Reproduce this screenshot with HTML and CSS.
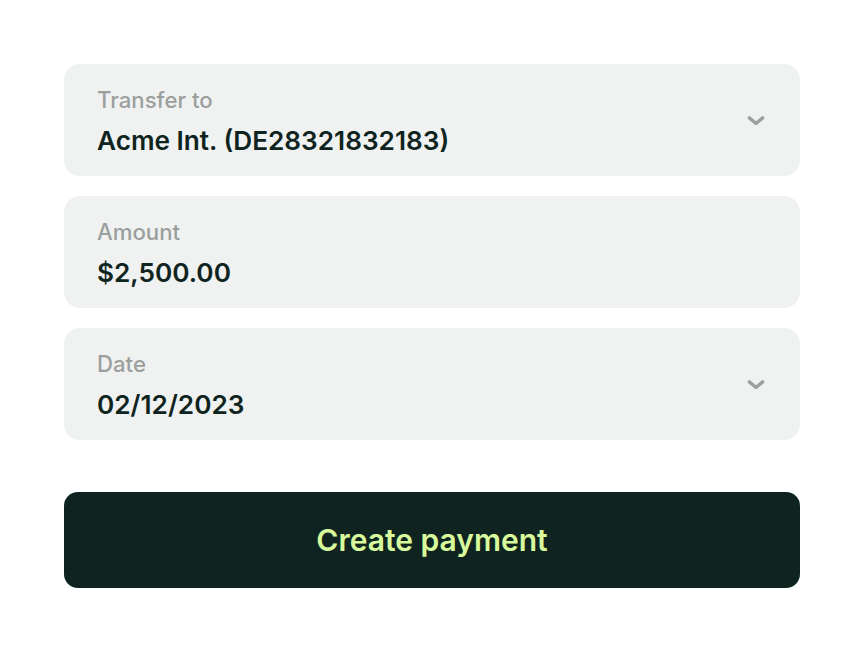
FILE: index.html
```html
<!DOCTYPE html>
<html>
<head>
<meta charset="utf-8">
<link rel="stylesheet" href="styles.css">
</head>
<body>
<main class="form">
  <div class="field">
    <div class="field-text">
      <div class="label">Transfer to</div>
      <div class="value">Acme Int. (DE28321832183)</div>
    </div>
    <svg class="chevron" width="18" height="12" viewBox="0 0 18 12"><path d="M2.5 3 L9 8.5 L15.5 3" fill="none" stroke="#9b9f9d" stroke-width="3.6" stroke-linecap="round" stroke-linejoin="round"/></svg>
  </div>
  <div class="field">
    <div class="field-text">
      <div class="label">Amount</div>
      <div class="value">$2,500.00</div>
    </div>
  </div>
  <div class="field">
    <div class="field-text">
      <div class="label">Date</div>
      <div class="value">02/12/2023</div>
    </div>
    <svg class="chevron" width="18" height="12" viewBox="0 0 18 12"><path d="M2.5 3 L9 8.5 L15.5 3" fill="none" stroke="#9b9f9d" stroke-width="3.6" stroke-linecap="round" stroke-linejoin="round"/></svg>
  </div>
  <button class="submit">Create payment</button>
</main>
</body>
</html>
```

FILE: styles.css
```css
* { box-sizing: border-box; }
html, body { margin: 0; padding: 0; background: #ffffff; }
body { font-family: Inter, "Noto Sans", sans-serif; }
.form {
  display: flex;
  flex-direction: column;
  gap: 20px;
  padding: 64px 64px 0 64px;
  width: 864px;
}
.field {
  height: 112px;
  background: #f0f2f1;
  border-radius: 16px;
  display: flex;
  align-items: center;
  justify-content: space-between;
  padding: 4px 35px 0 33px;
}
.field-text { display: flex; flex-direction: column; gap: 10px; }
.label {
  font-size: 22.2px;
  line-height: 28px;
  font-weight: 500;
  color: #9b9f9d;
}
.value {
  font-size: 26.2px;
  line-height: 34px;
  font-weight: 600;
  color: #0f2420;
}
.chevron { display: block; margin-top: -2px; }
.submit {
  margin-top: 32px;
  height: 96px;
  border: none;
  border-radius: 14px;
  background: #0f2420;
  color: #d9fa9c;
  font-family: Inter, "Noto Sans", sans-serif;
  font-size: 30px;
  font-weight: 600;
}
```
